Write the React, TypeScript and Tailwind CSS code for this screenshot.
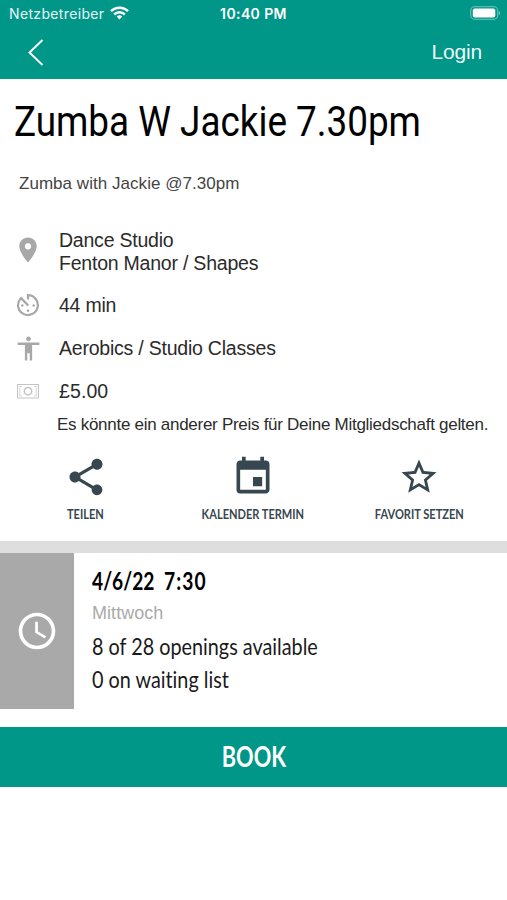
import React from "react";
import {
  MdAccessibility,
  MdAccessTime,
  MdEvent,
  MdPlace,
  MdShare,
  MdStarBorder,
} from "react-icons/md";

function StatusBar() {
  return (
    <div className="grid h-[27px] grid-cols-3 items-center px-[9px] font-['Inter',sans-serif] text-[14px] text-white/90">
      <div className="flex items-center gap-[6px]">
        <span className="tracking-[0.35px]">Netzbetreiber</span>
        <svg className="mb-[1px]" width="19" height="14" viewBox="0 0 19 14" fill="none" stroke="white" strokeWidth="2.5">
          <path d="M1 5.2a12 12 0 0 1 17 0" />
          <path d="M4.2 8.5a7.5 7.5 0 0 1 10.6 0" />
          <path d="M9.5 13.5 6.7 10.6a4 4 0 0 1 5.6 0z" fill="white" stroke="none" />
        </svg>
      </div>
      <span className="text-center font-semibold tracking-[0.4px] whitespace-nowrap text-white">10:40 PM</span>
      <svg className="-mr-[3px] mb-[1px] justify-self-end" width="31" height="14" viewBox="0 0 31 14">
        <rect x="0.7" y="0.7" width="27" height="12.6" rx="4" fill="none" stroke="white" strokeOpacity="0.35" strokeWidth="1.3" />
        <rect x="2.8" y="2.5" width="22.5" height="9" rx="2" fill="white" />
        <path d="M28.8 5v4q1.5-.6 1.5-2t-1.5-2" fill="white" fillOpacity="0.4" />
      </svg>
    </div>
  );
}

function Header() {
  return (
    <header className="h-[79px] bg-[#009688]">
      <StatusBar />
      <div className="flex h-[50px] items-center justify-between pr-[25px] pl-[28px]">
        <svg width="16" height="27" viewBox="0 0 16 27" fill="none" stroke="white" strokeWidth="1.9">
          <path d="M14.5 1 1.5 13.5l13 12.5" />
        </svg>
        <span className="text-[21px] tracking-[-0.2px] text-white/95">Login</span>
      </div>
    </header>
  );
}

function TimerIcon() {
  return (
    <svg className="mb-[1px]" width="24" height="24" viewBox="0 0 24 24" fill="none" stroke="currentColor" strokeWidth="2.2">
      <path d="M12 6.5V2.2a9.9 9.9 0 1 1-7.5 3.4" />
      <path d="m4.3 4.3 8 8.2" strokeWidth="2.4" />
      <g fill="currentColor" stroke="none">
        <circle cx="6.3" cy="12.5" r="1.2" />
        <circle cx="17.7" cy="12.5" r="1.2" />
        <circle cx="12" cy="17.8" r="1.2" />
      </g>
    </svg>
  );
}

function BanknoteIcon() {
  return (
    <svg width="22" height="15" viewBox="0 0 22 15" fill="none" stroke="#c4c4c4">
      <rect x="0.5" y="0.5" width="21" height="13.5" />
      <path d="M5 2.5H2.8V12H5M17 2.5h2.2V12H17" strokeOpacity="0.7" />
      <circle cx="11" cy="7.2" r="3.7" strokeWidth="1.5" />
    </svg>
  );
}

function InfoRow({ icon, children }: { icon: React.ReactNode; children: React.ReactNode }) {
  return (
    <div className="flex items-center">
      <div className="flex h-[23px] w-[59px] items-center justify-center pr-[3px] text-[#a8a8a8]">{icon}</div>
      <div className="text-[19.5px] leading-[23px] tracking-[-0.22px] text-[#2b2b2b]">{children}</div>
    </div>
  );
}

function Action({ icon, children }: { icon: React.ReactNode; children: React.ReactNode }) {
  return (
    <button className="flex w-[167px] flex-col items-center text-[#37474f]">
      <span className="flex h-[44px] items-center">{icon}</span>
      <span className="mt-[5px] inline-block scale-x-[0.79] font-['Lato',sans-serif] text-[14px] leading-[20px] font-bold whitespace-nowrap">
        {children}
      </span>
    </button>
  );
}

export default function App() {
  return (
    <div className="h-[900px] w-[507px] overflow-hidden bg-white font-['Liberation_Sans',Arial,sans-serif]">
      <Header />

      <h1 className="mt-[17px] ml-[14px] h-[50px] origin-left scale-x-[0.857] font-['Roboto',sans-serif] text-[43px] leading-[50px] whitespace-nowrap text-black">
        Zumba W Jackie 7.30pm
      </h1>
      <p className="mt-[28px] ml-[19px] text-[17px] leading-[20px] tracking-[0.04px] text-[#444]">
        Zumba with Jackie @7.30pm
      </p>

      <div className="mt-[35px] flex flex-col">
        <InfoRow icon={<MdPlace className="mb-[4px] shrink-0" size={30} />}>
          Dance Studio
          <br />
          Fenton Manor / Shapes
        </InfoRow>
        <div className="mt-[19px] flex flex-col gap-[20px]">
          <InfoRow icon={<TimerIcon />}>44 min</InfoRow>
          <InfoRow icon={<MdAccessibility className="shrink-0" size={29} />}>Aerobics / Studio Classes</InfoRow>
          <InfoRow icon={<BanknoteIcon />}>
            <span className="tracking-[0.1px]">£5.00</span>
          </InfoRow>
        </div>
      </div>
      <p className="mt-[11px] ml-[57px] text-[17px] leading-[22px] tracking-[-0.28px] whitespace-nowrap text-[#2b2b2b]">
        Es könnte ein anderer Preis für Deine Mitgliedschaft gelten.
      </p>

      <div className="mt-[19px] flex px-[2px]">
        <Action icon={<MdShare size={44} />}>TEILEN</Action>
        <Action icon={<MdEvent size={44} />}>KALENDER TERMIN</Action>
        <Action icon={<MdStarBorder className="mr-[2px]" size={42} />}>FAVORIT SETZEN</Action>
      </div>

      <div className="mt-[17px] h-[12px] bg-[#dedede]" />

      <div className="flex h-[156px]">
        <div className="flex w-[74px] items-center justify-center bg-[#a9a9a9] text-white">
          <MdAccessTime size={44} />
        </div>
        <div className="ml-[18px] whitespace-nowrap [font-variant-ligatures:none]">
          <div className="mt-[13px] flex origin-left scale-x-[0.8] gap-[12px] font-['Lato',sans-serif] text-[24px] leading-[30px] font-bold text-black">
            <span>4/6/22</span>
            <span className="tracking-[1.3px]">7:30</span>
          </div>
          <div className="mt-[6px] text-[18px] leading-[22px] tracking-[0.05px] text-[#aaa]">Mittwoch</div>
          <div className="mt-[5px] origin-left scale-x-[0.825] font-['Lato',sans-serif] text-[24px] leading-[33px] text-[#1a1a1a]">
            <div>8 of 28 openings available</div>
            <div>0 on waiting list</div>
          </div>
        </div>
      </div>

      <button className="mt-[18px] flex h-[60px] w-full items-center justify-center bg-[#009688] pb-[3px] text-white">
        <span className="inline-block scale-x-[0.75] font-['Lato',sans-serif] text-[29px] leading-[36px] font-bold">BOOK</span>
      </button>
    </div>
  );
}
